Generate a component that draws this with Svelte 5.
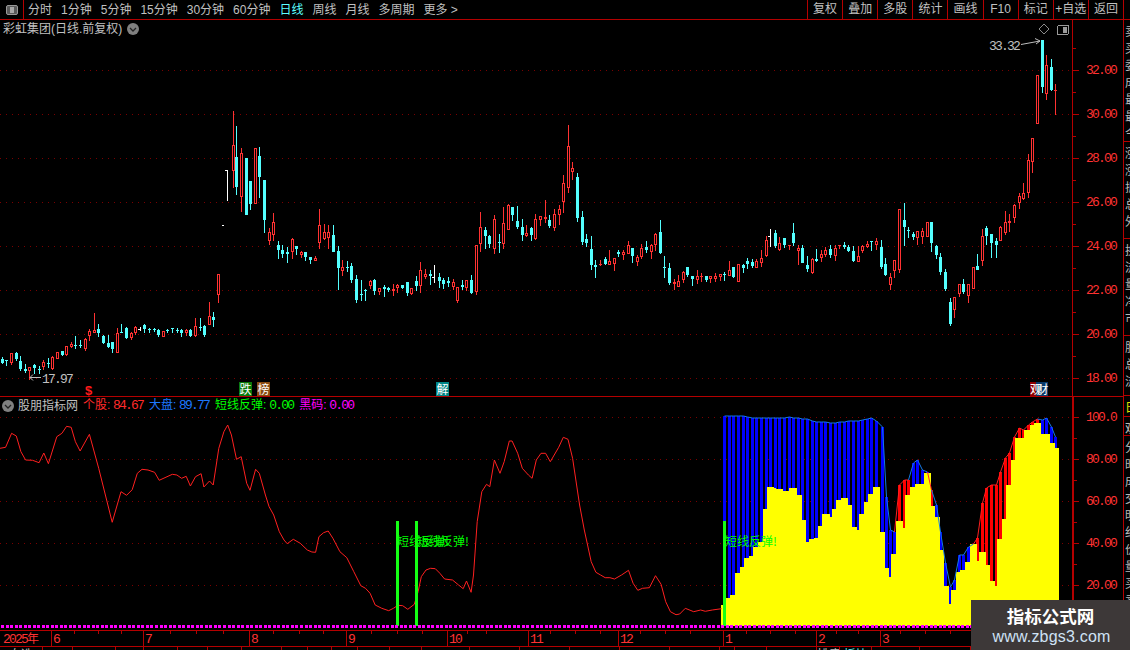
<script>
  const leftTabs = [
    { t: '分时' }, { t: '1分钟' }, { t: '5分钟' }, { t: '15分钟' }, { t: '30分钟' }, { t: '60分钟' },
    { t: '日线', on: true }, { t: '周线' }, { t: '月线' }, { t: '多周期' }, { t: '更多 >' }
  ];
  const rightTabs = ['复权', '叠加', '多股', '统计', '画线', 'F10', '标记', '+自选', '返回'];

  // x, colour, wick top, body top, body bottom, wick bottom (pixel rows)
  const raw = `2c357,359,363,364;6c360,360,361,366;11r353,353,363,365;16c352,353,359,361;20c356,361,369,371;25c364,369,371,373;29r367,367,371,380;34c364,365,368,374;39c366,369,370,374;43r360,362,367,370;48c358,363,364,368;52r356,357,369,370;57r352,352,359,359;62c351,351,355,356;66r346,346,355,356;71r342,344,347,348;75c336,345,346,349;80c340,345,346,348;85r338,339,349,351;89r329,331,336,341;94r313,330,333,333;98c324,329,333,337;103c335,336,343,344;108c335,343,347,348;112c342,342,349,353;117r328,333,353,353;121c324,332,332,333;126c327,328,338,339;131r332,333,338,340;135r326,327,333,335;140w327,329,329,331;144c324,325,329,333;149c328,329,329,333;154c328,329,329,332;158c329,330,335,337;163r331,331,337,337;167c329,330,330,333;172c328,328,329,333;177c328,330,330,333;181c329,330,333,337;186r329,330,333,336;190c329,330,336,337;195r318,326,336,337;200c318,327,327,331;204c325,326,335,337;209r302,316,325,325;213c312,317,320,327;218r274,274,295,303;227w170,170,170,201;233r111,145,171,188;236c126,157,187,195;241r148,153,197,212;246c158,158,215,215;250c181,181,204,210;255r148,148,204,204;259c147,156,177,198;264c180,180,220,233;269r228,232,241,245;273r213,222,235,241;278c241,245,250,259;282c245,250,254,258;287c247,252,254,263;292r238,239,252,259;296c246,246,249,255;301r251,252,255,258;305c252,252,257,261;310c257,257,260,264;315r256,258,261,261;319r209,225,243,249;324r224,232,239,240;328r225,232,238,249;333c225,235,252,252;338c246,251,268,290;342r260,267,271,276;347c261,267,267,272;351c263,266,280,283;356c275,279,300,303;361c280,294,294,301;365c289,290,290,301;370r280,281,286,289;374c279,280,291,295;379r288,288,292,295;384c285,287,289,297;388c287,288,290,292;393r284,289,291,296;397r284,285,288,293;402c285,285,288,289;407c282,282,293,296;411r288,288,294,295;416c276,281,286,291;420r262,270,286,293;425r269,274,277,279;430c270,274,276,285;434w265,277,277,283;439c273,277,281,288;443c278,280,284,289;448c277,281,283,287;453r279,282,287,290;457r287,287,301,303;462c280,285,287,290;466r280,280,288,291;471c275,280,293,294;476r245,245,292,295;480r212,227,244,252;485c227,230,236,249;489c235,236,244,248;494r215,219,249,254;499c234,242,242,253;503r207,223,244,249;508r204,205,230,230;512c207,207,215,221;517c206,221,227,229;522c219,227,235,241;526r225,233,236,237;531c227,228,235,241;535r214,219,239,240;540r216,216,220,226;545r200,217,219,223;549c215,220,226,228;554r209,214,228,231;559r205,209,215,225;563r175,183,202,213;568r125,146,188,193;572r162,168,172,180;577c173,177,218,222;582c211,217,242,245;586c234,239,243,247;591c236,249,265,270;595c260,265,267,278;600r260,264,264,266;605c257,259,264,265;609r250,261,265,265;614r258,258,264,271;618c250,252,254,257;623r250,252,255,260;628r241,245,254,254;632c248,248,256,263;637r255,257,262,266;641r244,248,257,259;646c241,247,250,253;651r244,245,252,259;655r233,234,245,251;660c220,232,253,254;664c256,267,267,278;669c263,268,283,285;674r279,282,284,290;678r275,281,287,287;683r271,272,280,283;687c267,267,275,277;692c276,276,279,286;697r270,276,280,284;701r273,276,276,282;706c276,276,280,282;710r276,276,279,283;715r273,276,279,282;720r274,274,277,281;724c272,274,274,281;729r261,270,276,276;733c267,267,277,278;738r264,264,282,282;743c264,265,268,273;747c258,261,264,269;752c259,262,266,268;756r259,261,268,268;761r250,258,263,267;766r236,240,256,257;770w229,236,236,247;775c230,233,246,248;779r237,243,250,251;784c238,238,245,248;789r245,245,246,250;793c223,233,243,246;798r245,248,251,265;802c245,248,263,263;807c256,265,269,272;812r258,259,273,274;816c249,259,261,262;821r250,254,258,262;825r247,250,255,257;830c245,249,255,258;835r245,248,256,261;839r245,245,246,249;844c242,245,247,249;848c245,247,251,252;853c246,251,261,262;858r246,256,262,262;862r245,246,251,253;867r241,244,247,248;871c241,241,242,251;876r238,241,245,250;881c240,247,267,269;885c258,264,275,276;890r273,277,285,290;894r260,260,271,278;899r209,209,270,273;904c203,220,227,246;908c227,230,230,238;913c232,234,237,240;917r231,231,238,245;922r228,231,237,244;927r222,222,237,237;931c222,222,243,252;936c245,246,255,259;940c253,257,272,275;945c269,272,289,291;950c298,302,324,326;954r297,297,310,318;959r284,284,294,297;963c279,284,292,294;968r284,284,296,303;973r267,267,289,289;977c254,266,270,270;982r229,236,261,266;986c226,228,236,245;991c234,234,243,258;996c238,241,245,258;1000r226,227,241,241;1005r211,222,233,235;1009r214,221,223,232;1014r204,205,218,223;1019r193,196,203,209;1023r183,193,199,200;1028r154,160,193,198;1032r138,138,162,173;1037r75,75,124,124;1042c40,40,87,93;1046r55,65,94,100;1051c59,67,90,91;1055r84,90,91,115`;
  const candles = raw.split(';').map((s) => {
    const m = s.match(/^(\d+)([rcw])(.*)$/);
    const [wt, bt, bb, wb] = m[3].split(',').map(Number);
    return { x: +m[1], c: m[2], wt, bt, bb, wb };
  });

  const grid = [
    { y: 70, l: '32.00' }, { y: 114, l: '30.00' }, { y: 158, l: '28.00' }, { y: 202, l: '26.00' },
    { y: 246, l: '24.00' }, { y: 290, l: '22.00' }, { y: 334, l: '20.00' }, { y: 378, l: '18.00' }
  ];
  const grid2 = [
    { y: 417, l: '100.0' }, { y: 459, l: '80.00' }, { y: 501, l: '60.00' }, { y: 543, l: '40.00' }, { y: 585, l: '20.00' }
  ];

  // left part of the red line, sampled from the crop
  const redPts = `0,100 12,97 25,55 35,63 45,110 55,135 70,136 84,143 94,114 104,146 122,65 133,55 143,34 153,37 162,80 172,108 192,58 212,160 241,322 260,230 272,241 284,224 295,175 305,163 318,165 332,172 342,196 370,178 380,180 390,190 400,184 409,213 420,185 432,176 438,216 450,198 458,210 470,100 481,50 489,30 497,60 508,133 518,125 530,205 537,226 549,163 557,175 570,240 578,275 588,300 600,350 610,375 617,386 630,373 645,385 660,405 670,411 678,412 685,365 695,353 705,348 715,370 730,410 745,428 760,470 775,512 785,520 795,535 806,570 820,580 835,587 845,580 855,571 865,572 876,583 890,568 898,530 905,485 915,465 925,460 935,461 945,475 955,492 972,495 985,510 995,521 1002,498 1012,532 1017,480 1025,320 1035,230 1045,208 1052,215 1062,135 1074,175 1083,140 1094,78 1100,78 1112,115 1122,160 1135,180 1143,190 1152,135 1162,115 1172,115 1182,140 1200,97 1210,67 1220,73 1230,130 1245,270 1255,345 1270,440 1280,472 1290,480 1300,488 1310,488 1320,492 1335,480 1350,466 1360,505 1370,526 1380,520 1395,518 1408,482 1420,508 1430,560 1440,590 1452,599 1460,597 1472,580 1490,590 1505,585 1515,589 1530,585 1550,581`
    .split(' ')
    .map((p) => {
      const [a, b] = p.split(',').map(Number);
      return `${(a / 2.148).toFixed(1)},${(415 + b / 3).toFixed(1)}`;
    })
    .join(' ');

  // yellow steps: start column, top (3x crop coordinates), closing at 1077
  const steps = [[63,615],[78,593],[90,585],[105,518],[120,500],[132,473],[147,467],[159,440],[174,425],[189,327],[201,261],[222,264],[228,267],[249,273],[267,264],[291,285],[306,360],[318,426],[327,417],[342,414],[354,378],[366,342],[390,351],[396,327],[408,300],[423,294],[444,315],[456,381],[471,390],[477,342],[492,306],[504,282],[519,261],[540,396],[555,504],[567,530],[573,462],[588,362],[609,384],[615,285],[630,261],[645,252],[672,219],[693,318],[705,351],[720,450],[732,558],[747,612],[753,570],[768,516],[780,510],[795,486],[810,432],[831,483],[837,456],[858,495],[870,543],[885,558],[891,417],[906,357],[918,255],[933,180],[945,114],[972,90],[990,75],[1002,69],[1023,102],[1050,129],[1065,144]];
  const cx = (p) => Math.round(700 + p / 3);
  const cy = (p) => Math.round(400 + p / 3);
  let yellow = `${cx(63)},626`;
  steps.forEach(([x, t], i) => {
    const end = i + 1 < steps.length ? steps[i + 1][0] : 1077;
    yellow += ` ${cx(x)},${cy(t)} ${cx(end)},${cy(t)}`;
  });
  yellow += ` ${cx(1077)},626`;

  // columns: x, colour, top (top in crop coordinates)
  const colsRaw = `724b48,729b48,733b48,738b48,743b48,747b50,752b55,756b55,761b55,766b55,770b55,775b53,779b55,784b55,789b52,793b55,798b55,802b57,807b57,812b62,816b67,821b65,825b66,830b70,835b70,839b66,844b66,848b62,853b62,858b62,862b60,867b57,871b55,876b62,882b80,886b290,890b390,894b395,899r255,904r240,908r240,913b190,917b180,922b210,927b215,931r270,936b315,940b395,945b490,950b560,954b540,959b465,963b465,968b440,973b432,977r415,982r310,986r265,991r255,996r255,1000r215,1005r175,1009r160,1014r110,1019r85,1023r90,1028r75,1032r65,1037r58,1042b60,1046b55,1051b80,1055b110`;
  const cols = colsRaw.split(',').map((s) => {
    const m = s.match(/^(\d+)([br])(\d+)$/);
    return { x: +m[1], blue: m[2] === 'b', top: cy(+m[3]) };
  });
  const segs = cols.slice(1).map((c, i) => ({ a: cols[i], b: c }));

  const dots = Array.from({ length: 215 }, (_, i) => Math.round(1 + i * 4.53));

  const months = [
    { x: 51, l: '6' }, { x: 143, l: '7' }, { x: 249, l: '8' }, { x: 346, l: '9' }, { x: 447, l: '10' },
    { x: 528, l: '11' }, { x: 618, l: '12' }, { x: 723, l: '1' }, { x: 816, l: '2' }, { x: 880, l: '3' }
  ];
  const minor = [74, 98, 121, 170, 196, 223, 273, 299, 323, 371, 397, 422, 467, 486, 550, 575, 600, 640, 665, 690, 746, 770, 795, 836, 858, 900, 925, 950];

  const strip = [
    { h: 122, rows: ['卖', '买', '委', '成', '最', '最', '今'] },
    { h: 97, rows: ['涨', '涨', '振', '总', '外'] },
    { h: 97, rows: ['换', '流', '量', '净', '市'] },
    { h: 60, rows: ['股', '总', '流'] },
    { h: 21, rows: ['日'], gold: true },
    { h: 19, rows: ['观'] },
    { h: 214, rows: ['分', '时', '成', '交', '明', '细', '价', '量', '买', '卖', '笔', '数'] }
  ];

  const bottom = [
    ['自选', 43], ['', 30], ['', 43], ['', 28], ['', 34], ['', 30], ['', 34], ['', 40], ['', 26], ['', 24], ['', 26], ['', 32], ['', 32], ['', 48], ['', 50], ['', 50], ['', 50], ['', 50], ['', 50], ['', 15], ['', 32], ['', 50], ['排序', 23], ['板块', 32, true], ['', 48], ['', 51]
  ];
</script>

<div class="app">
  <header class="bar">
    <div class="left">
      <div class="cell-icon">
        <span class="win"><i></i></span>
      </div>
      <nav class="tabs">
        {#each leftTabs as t}
          <span class:on={t.on}>{t.t}</span>
        {/each}
      </nav>
    </div>
    <nav class="right">
      {#each rightTabs as t}
        <span>{t}</span>
      {/each}
    </nav>
  </header>

  <div class="body">
    <div class="charts">
      <section class="panel main">
        <div class="title">
          <span>彩虹集团(日线.前复权)</span>
          <svg class="chev" width="12" height="12" viewBox="0 0 12 12"><circle cx="6" cy="6" r="6" fill="#808080"/><path d="M3 5l3 3 3-3" fill="none" stroke="#222" stroke-width="1.3"/></svg>
        </div>
        <svg class="plot" width="1123" height="377" viewBox="0 20 1123 377">
          {#each grid as g}
            <line class="dot" x1="0" x2="1072" y1={g.y + 0.5} y2={g.y + 0.5} />
            <rect class="axis" x="1073" y={g.y} width="6" height="1" />
            <rect class="axis" x="1073" y={g.y - 22} width="3" height="1" />
            <text class="num" x="1086" y={g.y + 4}>{g.l}</text>
          {/each}
          <rect class="axis" x="1072" y="20" width="1" height="376" />
          <rect class="axis" x="0" y="396" width="1123" height="1" />
          <rect class="axis" x="1072" y="396" width="51" height="2" />

          {#each candles as k}
            {#if k.c === 'w'}
              <rect class="white" x={k.x} y={k.wt} width="1" height={k.wb - k.wt} />
              <rect class="white" x={k.x - 2} y={k.bt} width="2" height="1" />
            {:else if k.c === 'c'}
              <rect class="cyan" x={k.x} y={k.wt} width="1" height={k.wb - k.wt} />
              <rect class="cyan" x={k.x - 1} y={k.bt} width="3" height={Math.max(1, k.bb - k.bt)} />
            {:else}
              <rect class="red" x={k.x} y={k.wt} width="1" height={k.wb - k.wt} />
              {#if k.bb - k.bt > 2}
                <rect class="redbody" x={k.x - 0.5} y={k.bt + 0.5} width="2" height={k.bb - k.bt - 1} />
              {:else}
                <rect class="red" x={k.x - 1} y={k.bt} width="3" height={Math.max(1, k.bb - k.bt)} />
              {/if}
            {/if}
          {/each}
          <rect class="white" x="222" y="225" width="2" height="1" />

          <text class="note" x="42" y="383">17.97</text>
          <path class="arrow" d="M41 377.5H30M33 374.5l-3 3 3 3" />
          <text class="note" x="989" y="50">33.32</text>
          <path class="arrow" d="M1021 44.5l19-3.5M1035 38.5l5 2.5-4 3" />
          <path class="diamond" d="M1044 24l5 5-5 5-5-5z" />
          <rect class="winbox" x="1057.5" y="25.5" width="11" height="9" rx="1.5" />
          <rect class="winbar" x="1063" y="27" width="4" height="6" />

          <text class="dollar" x="85" y="395">$</text>
          <rect x="239" y="382" width="13" height="14" fill="#0a7a0a" />
          <text class="tag" x="239.5" y="393.5">跌</text>
          <rect x="257" y="382" width="13" height="14" fill="#8a4a10" />
          <text class="tag" x="257.5" y="393.5">榜</text>
          <rect x="436" y="382" width="13" height="14" fill="#008484" />
          <text class="tag" x="436.5" y="393.5">解</text>
          <rect x="1030" y="382" width="6" height="14" fill="#8c0000" />
          <rect x="1036" y="382" width="12" height="14" fill="#0a3a6a" />
          <text class="tag" x="1030" y="393.5">观</text>
          <text class="tag" x="1036.5" y="393.5">财</text>
        </svg>
      </section>

      <section class="panel ind">
        <div class="legend">
          <svg class="chev" width="12" height="12" viewBox="0 0 12 12"><circle cx="6" cy="6" r="6" fill="#808080"/><path d="M3 5l3 3 3-3" fill="none" stroke="#222" stroke-width="1.3"/></svg>
          <span class="lg name">股朋指标网</span>
          <span class="lg r">个股:<b>84.67</b></span>
          <span class="lg bl">大盘:<b>89.77</b></span>
          <span class="lg g">短线反弹:<b>0.00</b></span>
          <span class="lg m">黑码:<b>0.00</b></span>
        </div>
        <svg class="plot" width="1123" height="233" viewBox="0 397 1123 233">
          {#each grid2 as g}
            <line class="dot" x1="0" x2="1072" y1={g.y + 0.5} y2={g.y + 0.5} />
            <rect class="axis" x="1074" y={g.y} width="5" height="1" />
            <rect class="axis" x="1074" y={g.y + 21} width="3" height="1" />
            <text class="num" x="1086" y={g.y + 4}>{g.l}</text>
          {/each}
          <rect class="axis" x="1072" y="397" width="2" height="233" />

          {#each cols as c}
            <rect class={c.blue ? 'bluebar' : 'redbar'} x={c.x - 1} y={c.top} width="3" height={626 - c.top} />
          {/each}
          <polygon class="yellow" points={yellow} />
          {#each segs as s}
            <line class={s.b.blue ? 'lineb' : 'liner'} x1={s.a.x + 0.5} y1={s.a.top} x2={s.b.x + 0.5} y2={s.b.top} />
          {/each}
          <polyline class="redline" points={redPts} />

          <rect class="gbar" x="396" y="521" width="3" height="105" />
          <rect class="gbar" x="415" y="521" width="3" height="105" />
          <rect class="gbar" x="723" y="521" width="3" height="105" />
          <text class="sig" x="397" y="546">短线反弹!</text>
          <text class="sig" x="417" y="546">短线反弹!</text>
          <text class="sig" x="725" y="546">短线反弹!</text>

          {#each dots as d}
            <rect class="mag" x={d} y="625" width="3" height="3" />
          {/each}
        </svg>
      </section>

      <section class="panel time">
        <svg class="plot" width="1123" height="17" viewBox="0 630 1123 17">
          <rect class="axis" x="0" y="630" width="1123" height="1" />
          <rect class="axis" x="0" y="646" width="1123" height="1" />
          <rect class="axis" x="1072" y="630" width="2" height="16" />
          {#each minor as m}
            <rect class="axis" x={m} y="631" width="1" height="3" />
          {/each}
          {#each months as m}
            <rect class="axis" x={m.x} y="630" width="1" height="16" />
            <text class="num" x={m.x + 2} y="643">{m.l}</text>
          {/each}
          <text class="num yr" x="3" y="643">2025<tspan class="cjk">年</tspan></text>
        </svg>
      </section>

      <footer class="bottom">
        {#each bottom as b}
          <span class:active={b[2]} style:width="{b[1]}px">{b[0]}</span>
        {/each}
      </footer>
    </div>

    <aside class="strip">
      {#each strip as block}
        <div class="block" class:gold={block.gold} style:height="{block.h}px">
          {#each block.rows as r}
            <span>{r}</span>
          {/each}
        </div>
      {/each}
    </aside>
  </div>

  <div class="mark">
    <strong>指标公式网</strong>
    <span>www.zbgs3.com</span>
  </div>
</div>

<style>
  :global(body) { margin: 0; background: #000; }
  .app {
    position: relative;
    width: 1130px;
    height: 650px;
    overflow: hidden;
    background: #000;
    color: #c0c0c0;
    font: 12px/14px "Liberation Sans", "Noto Sans CJK SC", sans-serif;
  }
  .bar {
    height: 19px;
    border-bottom: 1px solid #b40000;
    display: flex;
    justify-content: space-between;
  }
  .left { display: flex; }
  .cell-icon {
    width: 23px;
    border-right: 1px solid #b40000;
    display: flex;
    align-items: center;
    justify-content: center;
  }
  .win {
    width: 10px;
    height: 8px;
    border: 1px solid #999;
    border-radius: 2px;
    background: #5a5a5a;
    display: flex;
    justify-content: flex-end;
  }
  .win i { width: 4px; background: #a8a8a8; margin: 1px 3px 1px 0; }
  .tabs { display: flex; gap: 9px; padding-left: 4px; align-items: center; }
  .tabs .on { color: #5cffff; }
  .right { display: flex; width: 317px; margin-right: 6px; }
  .right span {
    flex: 1;
    border-left: 1px solid #b40000;
    text-align: center;
    line-height: 19px;
    white-space: nowrap;
  }
  .right span:last-child { border-right: 1px solid #b40000; }

  .body { display: flex; }
  .charts { width: 1123px; }
  .panel { position: relative; }
  .plot { display: block; shape-rendering: crispEdges; }
  .title {
    position: absolute;
    left: 3px;
    top: 2px;
    display: flex;
    align-items: center;
    gap: 5px;
  }
  .legend {
    position: absolute;
    left: 2px;
    top: 1px;
    display: flex;
    align-items: center;
    gap: 6px;
  }
  .lg { white-space: nowrap; }
  .lg b {
    font: 400 13px "Liberation Mono", monospace;
    letter-spacing: -1.8px;
    margin-left: 2.7px;
  }
  .name { margin: 0 -1px 0 -2px; }
  .r { color: #ff2a2a; }
  .bl { color: #1e78ff; }
  .g { color: #00ff00; }
  .m { color: #ff00ff; }

  .dot { stroke: #7a0000; stroke-width: 1; stroke-dasharray: 1 5; shape-rendering: auto; }
  .axis { fill: #b40000; }
  .num {
    font: 13px "Liberation Mono", monospace;
    letter-spacing: -1.8px;
    fill: #ff3232;
    shape-rendering: auto;
  }
  .yr .cjk { font: 12px "Noto Sans CJK SC", sans-serif; letter-spacing: 0; }
  .note {
    font: 13px "Liberation Mono", monospace;
    letter-spacing: -1.8px;
    fill: #c0c0c0;
  }
  .arrow, .diamond { fill: none; stroke: #bdbdbd; stroke-width: 1; shape-rendering: auto; }
  .diamond { stroke: #8a8a8a; }
  .winbox { fill: none; stroke: #9a9a9a; }
  .winbar { fill: #9a9a9a; }
  .dollar { font: 700 13px "Liberation Sans", sans-serif; fill: #ff1a1a; }
  .tag { font: 12px "Noto Sans CJK SC", sans-serif; fill: #fff; }
  .sig { font: 12px "Noto Sans CJK SC", sans-serif; fill: #00ff00; }

  .cyan { fill: #54ffff; }
  .red { fill: #ff3232; }
  .redbody { fill: #000; stroke: #ff3232; stroke-width: 1; }
  .white { fill: #fff; }
  .bluebar { fill: #0000ff; }
  .redbar { fill: #ff0000; }
  .yellow { fill: #ffff00; }
  .gbar { fill: #14ff14; }
  .mag { fill: #ff00ff; }
  .lineb { stroke: #1478e6; stroke-width: 1; shape-rendering: auto; }
  .liner { stroke: #ff2020; stroke-width: 1; shape-rendering: auto; }
  .redline { fill: none; stroke: #ff2020; stroke-width: 1; shape-rendering: auto; }

  .bottom { height: 3px; display: flex; overflow: hidden; }
  .bottom span {
    box-sizing: border-box;
    border-right: 1px solid #b40000;
    text-align: center;
    overflow: hidden;
    white-space: nowrap;
    line-height: 17px;
    color: #c0c0c0;
  }
  .bottom .active { color: #5cffff; }

  .strip {
    width: 7px;
    height: 630px;
    border-left: 1px solid #b40000;
    overflow: hidden;
  }
  .block {
    box-sizing: border-box;
    border-bottom: 1px solid #b40000;
    overflow: hidden;
    padding: 5px 0 0 1px;
    display: flex;
    flex-direction: column;
    gap: 3px;
    white-space: nowrap;
  }
  .block span { display: block; width: 14px; color: #b8b8b8; }
  .block.gold span { color: #e0e000; }

  .mark {
    position: absolute;
    right: 0;
    bottom: 0;
    width: 159px;
    height: 50px;
    background: #3d3838;
    display: flex;
    flex-direction: column;
    align-items: center;
  }
  .mark strong {
    font: 700 17.5px/22px "Noto Sans CJK SC", sans-serif;
    color: #fff;
    margin-top: 5px;
  }
  .mark span {
    font: 16px/19px "Liberation Sans", sans-serif;
    letter-spacing: 0.2px;
    color: #cfe2f5;
    margin-left: 2px;
  }
</style>
